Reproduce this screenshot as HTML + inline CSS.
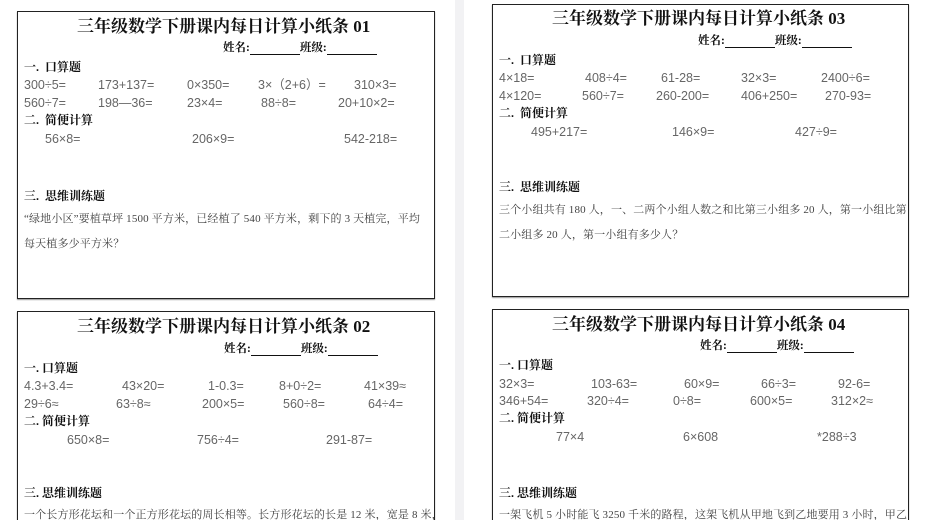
<!DOCTYPE html>
<html><head><meta charset="utf-8"><style>
html,body{margin:0;width:928px;height:520px;overflow:hidden;background:#fff}
#w{position:relative;width:928px;height:520px;overflow:hidden;font-family:"Liberation Sans","Noto Sans CJK SC",sans-serif}
.p{position:absolute;border:1px solid #222;background:#fff;box-shadow:0 1px 1px #999}
.t{position:absolute;white-space:nowrap;line-height:1}
.ti{font-family:"Liberation Serif","Noto Serif CJK SC",serif;font-size:17px;font-weight:bold;color:#111;transform:translateY(-9px)}
.nm{font-family:"Liberation Serif","Noto Serif CJK SC",serif;font-size:11.5px;font-weight:bold;color:#111;transform:translateY(-6px)}
.nm u{display:inline-block;width:50px;border-bottom:1px solid #111;height:10px;vertical-align:bottom}
.h{font-family:"Liberation Serif","Noto Serif CJK SC",serif;font-size:12px;font-weight:bold;color:#111;transform:translateY(-6px)}
.n{font-size:12.5px;color:#666;transform:translateY(-5px)}
.x{font-family:"Liberation Serif","Noto Serif CJK SC",serif;font-size:11px;letter-spacing:0.15px;color:#444;transform:translateY(-6px)}
</style></head><body><div id="w">
<div style="position:absolute;left:455px;top:0;width:9px;height:520px;background:#f2f2f4"></div>
<div class="p" style="left:17px;top:11px;width:416px;height:286px"></div>
<div class="p" style="left:492px;top:4px;width:415px;height:291px"></div>
<div class="p" style="left:17px;top:311px;width:416px;height:230px"></div>
<div class="p" style="left:492px;top:309px;width:415px;height:230px"></div>

<!-- P1 -->
<div class="t ti" style="left:77px;top:27px">三年级数学下册课内每日计算小纸条 01</div>
<div class="t nm" style="left:223px;top:49px">姓名:<u></u>班级:<u></u></div>
<div class="t h" style="left:24px;top:67px">一.&nbsp; 口算题</div>
<div class="t n" style="left:24px;top:84px">300÷5=</div><div class="t n" style="left:98px;top:84px">173+137=</div><div class="t n" style="left:187px;top:84px">0×350=</div><div class="t n" style="left:258px;top:84px">3×（2+6）=</div><div class="t n" style="left:354px;top:84px">310×3=</div>
<div class="t n" style="left:24px;top:102px">560÷7=</div><div class="t n" style="left:98px;top:102px">198—36=</div><div class="t n" style="left:187px;top:102px">23×4=</div><div class="t n" style="left:261px;top:102px">88÷8=</div><div class="t n" style="left:338px;top:102px">20+10×2=</div>
<div class="t h" style="left:24px;top:120px">二.&nbsp; 简便计算</div>
<div class="t n" style="left:45px;top:138px">56×8=</div><div class="t n" style="left:192px;top:138px">206×9=</div><div class="t n" style="left:344px;top:138px">542-218=</div>
<div class="t h" style="left:24px;top:196px">三.&nbsp; 思维训练题</div>
<div class="t x" style="left:24px;top:220px">“绿地小区”要植草坪 1500 平方米，已经植了 540 平方米，剩下的 3 天植完，平均</div>
<div class="t x" style="left:24px;top:245px">每天植多少平方米？</div>

<!-- P3 -->
<div class="t ti" style="left:552px;top:19px">三年级数学下册课内每日计算小纸条 03</div>
<div class="t nm" style="left:698px;top:42px">姓名:<u></u>班级:<u></u></div>
<div class="t h" style="left:499px;top:60px">一.&nbsp; 口算题</div>
<div class="t n" style="left:499px;top:77px">4×18=</div><div class="t n" style="left:585px;top:77px">408÷4=</div><div class="t n" style="left:661px;top:77px">61-28=</div><div class="t n" style="left:741px;top:77px">32×3=</div><div class="t n" style="left:821px;top:77px">2400÷6=</div>
<div class="t n" style="left:499px;top:95px">4×120=</div><div class="t n" style="left:582px;top:95px">560÷7=</div><div class="t n" style="left:656px;top:95px">260-200=</div><div class="t n" style="left:741px;top:95px">406+250=</div><div class="t n" style="left:825px;top:95px">270-93=</div>
<div class="t h" style="left:499px;top:113px">二.&nbsp; 简便计算</div>
<div class="t n" style="left:531px;top:131px">495+217=</div><div class="t n" style="left:672px;top:131px">146×9=</div><div class="t n" style="left:795px;top:131px">427÷9=</div>
<div class="t h" style="left:499px;top:187px">三.&nbsp; 思维训练题</div>
<div class="t x" style="left:499px;top:211px">三个小组共有 180 人，一、二两个小组人数之和比第三小组多 20 人，第一小组比第</div>
<div class="t x" style="left:499px;top:236px">二小组多 20 人，第一小组有多少人？</div>

<!-- P2 -->
<div class="t ti" style="left:77px;top:327px">三年级数学下册课内每日计算小纸条 02</div>
<div class="t nm" style="left:224px;top:350px">姓名:<u></u>班级:<u></u></div>
<div class="t h" style="left:24px;top:368px">一.&nbsp;口算题</div>
<div class="t n" style="left:24px;top:385px">4.3+3.4=</div><div class="t n" style="left:122px;top:385px">43×20=</div><div class="t n" style="left:208px;top:385px">1-0.3=</div><div class="t n" style="left:279px;top:385px">8+0÷2=</div><div class="t n" style="left:364px;top:385px">41×39≈</div>
<div class="t n" style="left:24px;top:403px">29÷6≈</div><div class="t n" style="left:116px;top:403px">63÷8≈</div><div class="t n" style="left:202px;top:403px">200×5=</div><div class="t n" style="left:283px;top:403px">560÷8=</div><div class="t n" style="left:368px;top:403px">64÷4=</div>
<div class="t h" style="left:24px;top:421px">二.&nbsp;简便计算</div>
<div class="t n" style="left:67px;top:439px">650×8=</div><div class="t n" style="left:197px;top:439px">756÷4=</div><div class="t n" style="left:326px;top:439px">291-87=</div>
<div class="t h" style="left:24px;top:493px">三.&nbsp;思维训练题</div>
<div class="t x" style="left:24px;top:516px">一个长方形花坛和一个正方形花坛的周长相等。长方形花坛的长是 12 米，宽是 8 米，</div>

<!-- P4 -->
<div class="t ti" style="left:552px;top:325px">三年级数学下册课内每日计算小纸条 04</div>
<div class="t nm" style="left:700px;top:347px">姓名:<u></u>班级:<u></u></div>
<div class="t h" style="left:499px;top:365px">一.&nbsp;口算题</div>
<div class="t n" style="left:499px;top:383px">32×3=</div><div class="t n" style="left:591px;top:383px">103-63=</div><div class="t n" style="left:684px;top:383px">60×9=</div><div class="t n" style="left:761px;top:383px">66÷3=</div><div class="t n" style="left:838px;top:383px">92-6=</div>
<div class="t n" style="left:499px;top:400px">346+54=</div><div class="t n" style="left:587px;top:400px">320÷4=</div><div class="t n" style="left:673px;top:400px">0÷8=</div><div class="t n" style="left:750px;top:400px">600×5=</div><div class="t n" style="left:831px;top:400px">312×2≈</div>
<div class="t h" style="left:499px;top:418px">二.&nbsp;简便计算</div>
<div class="t n" style="left:556px;top:436px">77×4</div><div class="t n" style="left:683px;top:436px">6×608</div><div class="t n" style="left:817px;top:436px">*288÷3</div>
<div class="t h" style="left:499px;top:493px">三.&nbsp;思维训练题</div>
<div class="t x" style="left:499px;top:516px">一架飞机 5 小时能飞 3250 千米的路程，这架飞机从甲地飞到乙地要用 3 小时，甲乙</div>
</div></body></html>
